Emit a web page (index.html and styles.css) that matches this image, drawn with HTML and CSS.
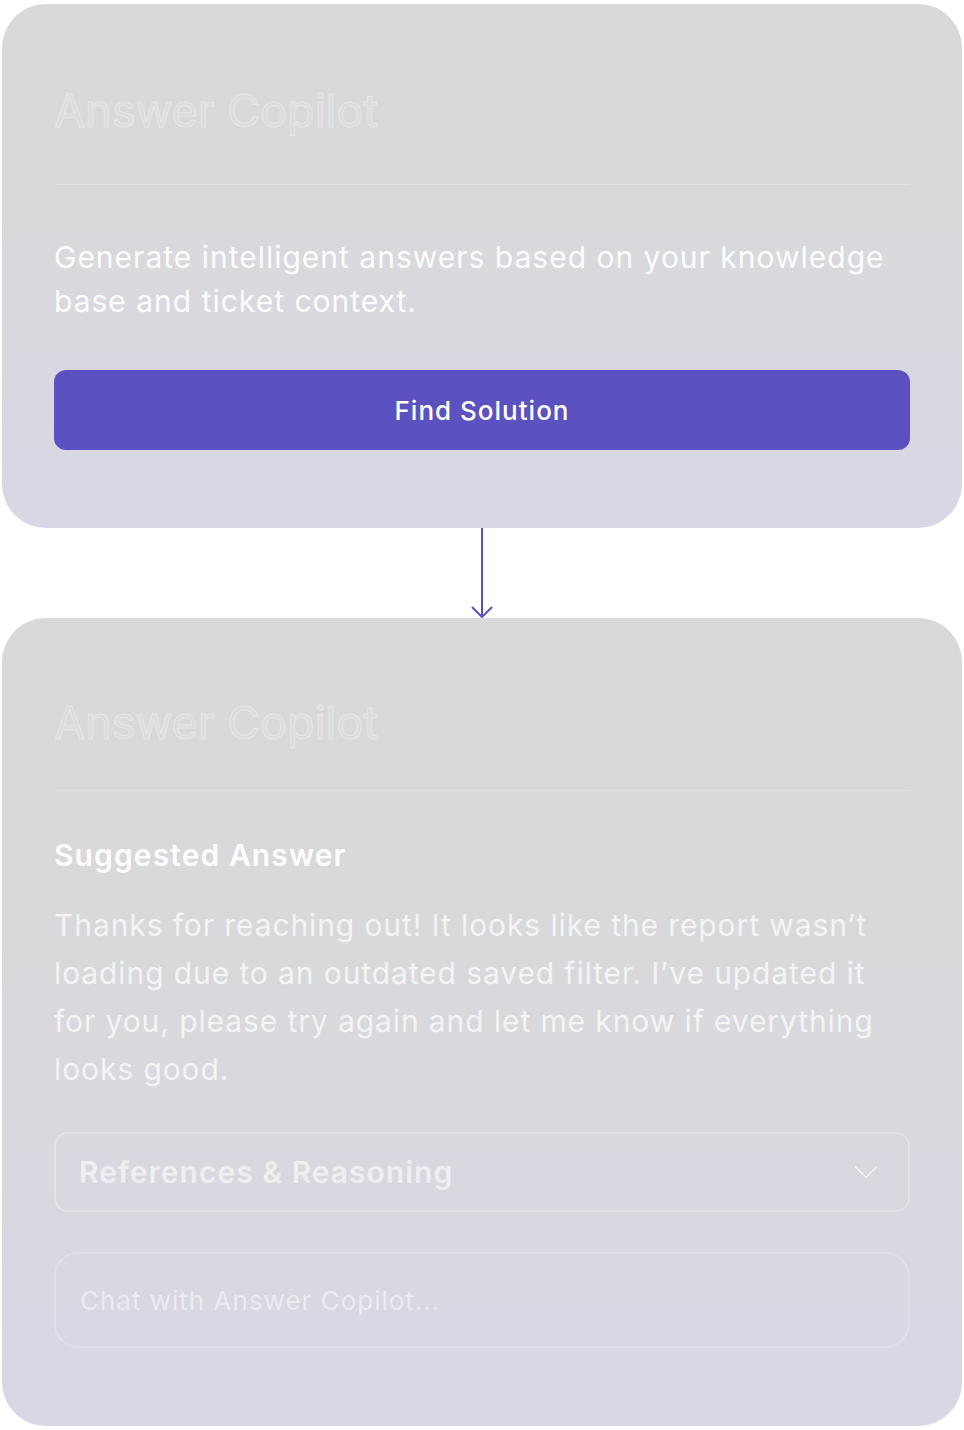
FILE: index.html
```html
<!DOCTYPE html>
<html lang="en">
<head>
<meta charset="utf-8">
<title>Answer Copilot</title>
<link rel="stylesheet" href="styles.css">
</head>
<body>
<main class="flow">
  <section class="card card-intro">
    <header class="card-head">
      <h1 class="card-title">Answer Copilot</h1>
    </header>
    <p class="intro-text">Generate intelligent answers based on your knowledge base and ticket context.</p>
    <button class="primary-btn" type="button">Find Solution</button>
  </section>

  <div class="connector">
    <svg class="connector-arrow" width="22" height="90" viewBox="0 0 22 90" aria-hidden="true">
      <line x1="11" y1="0" x2="11" y2="89" />
      <polyline points="1,79 11,89 21,79" />
    </svg>
  </div>

  <section class="card card-answer">
    <header class="card-head card-head-answer">
      <h1 class="card-title">Answer Copilot</h1>
    </header>
    <h2 class="answer-label">Suggested Answer</h2>
    <p class="answer-text">Thanks for reaching out! It looks like the report wasn’t loading due to an outdated saved filter. I’ve updated it for you, please try again and let me know if everything looks good.</p>
    <div class="refs">
      <span class="refs-label">References &amp; Reasoning</span>
      <svg class="refs-chevron" width="24" height="14" viewBox="0 0 24 14" aria-hidden="true">
        <polyline points="1,1.5 12,12.5 23,1.5" />
      </svg>
    </div>
    <div class="chat">
      <span class="chat-placeholder">Chat with Answer Copilot...</span>
    </div>
  </section>
</main>
</body>
</html>
```

FILE: styles.css
```css
* {
  box-sizing: border-box;
}

html, body {
  margin: 0;
  padding: 0;
  background: #ffffff;
}

body {
  font-family: Inter, "Noto Sans", "Liberation Sans", sans-serif;
  color: #ffffff;
}

.flow {
  display: flex;
  flex-direction: column;
  padding: 4px 2px 0;
}

.card {
  border-radius: 44px;
  padding: 81px 52px 78px;
  background: linear-gradient(180deg, #d9d9d9 0%, #d9d9dc 40%, #d8d7e5 100%);
  display: flex;
  flex-direction: column;
}

.card-answer {
  padding-top: 79px;
}

.card-head {
  padding-bottom: 47px;
  border-bottom: 1px solid rgba(255, 255, 255, 0.22);
}

.card-head-answer {
  padding-bottom: 41px;
}

.card-title {
  margin: 0;
  font-size: 45px;
  line-height: 52px;
  font-weight: 400;
  color: rgba(255, 255, 255, 0.1);
  -webkit-text-stroke: 1px rgba(255, 255, 255, 0.35);
  letter-spacing: 0;
}

.intro-text {
  margin: 50px 0 0;
  font-size: 30px;
  line-height: 44px;
  letter-spacing: 1px;
  font-weight: 400;
  color: rgba(255, 255, 255, 0.95);
}

.primary-btn {
  margin-top: 47px;
  height: 80px;
  border: none;
  border-radius: 12px;
  background: #5c51c1;
  color: #ffffff;
  font-family: inherit;
  font-size: 26px;
  letter-spacing: 1px;
  font-weight: 500;
  padding: 0;
}

.connector {
  height: 90px;
  display: flex;
  justify-content: center;
}

.connector-arrow {
  display: block;
  fill: none;
  stroke: #5c51c1;
  stroke-width: 2;
}

.answer-label {
  margin: 44px 0 0;
  font-size: 30px;
  line-height: 40px;
  letter-spacing: 1.1px;
  font-weight: 600;
  color: rgba(255, 255, 255, 0.95);
}

.answer-text {
  margin: 26px 0 0;
  font-size: 30px;
  line-height: 48px;
  letter-spacing: 0.9px;
  font-weight: 400;
  color: rgba(255, 255, 255, 0.72);
}

.refs {
  margin-top: 39px;
  height: 80px;
  border: 2px solid rgba(255, 255, 255, 0.25);
  border-radius: 14px;
  padding: 0 30px 0 23px;
  display: flex;
  align-items: center;
  justify-content: space-between;
}

.refs-label {
  font-size: 30px;
  letter-spacing: 1px;
  font-weight: 600;
  color: rgba(255, 255, 255, 0.6);
}

.refs-chevron {
  display: block;
  fill: none;
  stroke: rgba(255, 255, 255, 0.75);
  stroke-width: 1.5;
}

.chat {
  margin-top: 40px;
  height: 96px;
  border: 2px solid rgba(255, 255, 255, 0.2);
  border-radius: 24px;
  padding: 0 24px;
  display: flex;
  align-items: center;
}

.chat-placeholder {
  font-size: 26px;
  letter-spacing: 1px;
  font-weight: 400;
  color: rgba(255, 255, 255, 0.5);
}
```
